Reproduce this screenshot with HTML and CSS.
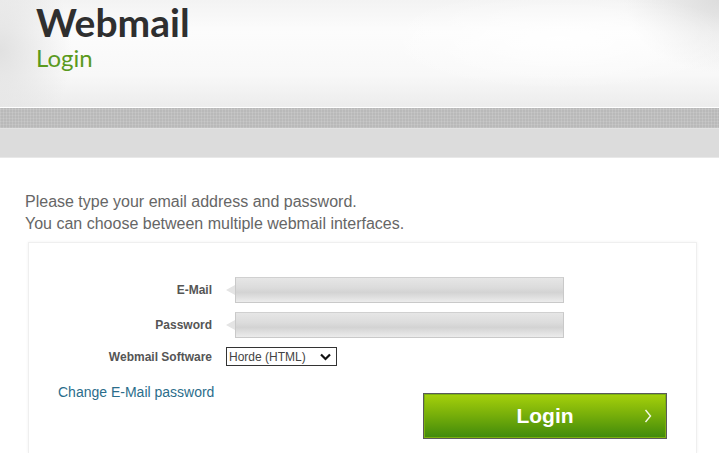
FILE: index.html
```html
<!DOCTYPE html>
<html lang="en">

<head>
  <meta charset="UTF-8">
  <meta name="viewport" content="width=device-width, initial-scale=1.0">
  <title>Webmail Login</title>
  <link rel="stylesheet" href="styles.css">
</head>

<body>
  <header class="masthead">
    <h1>Webmail</h1>
    <h2>Login</h2>
  </header>
  <div class="stripe"></div>
  <div class="band"></div>

  <main class="content">
    <p class="intro">Please type your email address and password.<br>You can choose between multiple webmail interfaces.</p>

    <form class="card">
      <div class="fields">
        <label for="email">E-Mail</label>
        <span class="field"><input type="text" id="email"></span>

        <label for="password">Password</label>
        <span class="field"><input type="password" id="password"></span>

        <label for="software">Webmail Software</label>
        <span class="picker">
          <select id="software">
            <option>Horde (HTML)</option>
            <option>Roundcube</option>
            <option>SquirrelMail</option>
          </select>
          <svg class="picker-arrow" width="11" height="8" viewBox="0 0 11 8"><path d="M1 1.5 L5.5 6 L10 1.5" fill="none" stroke="#111" stroke-width="2.2"/></svg>
        </span>
      </div>

      <div class="actions">
        <a href="#" class="change-link">Change E-Mail password</a>
        <button type="submit" class="login-btn">Login
          <svg class="chev" width="8" height="14" viewBox="0 0 8 14"><path d="M1.5 1 L6.5 7 L1.5 13" fill="none" stroke="#f4f9e8" stroke-width="1.4"/></svg>
        </button>
      </div>
    </form>
  </main>
</body>

</html>
```

FILE: styles.css
```css
body {
  margin: 0;
  font-family: "Liberation Sans", Arial, sans-serif;
  background-color: #fff;
  color: #666;
}

/* header area */
.masthead {
  height: 108px;
  box-sizing: border-box;
  padding: 0 0 0 36px;
  background:
    radial-gradient(ellipse 260px 70px at 560px 40px, rgba(255, 255, 255, 0.9), rgba(255, 255, 255, 0) 70%),
    radial-gradient(ellipse 120px 90px at 720px 0, rgba(215, 215, 215, 0.8), rgba(215, 215, 215, 0) 80%),
    radial-gradient(ellipse 90px 120px at 0 50px, rgba(222, 222, 222, 0.9), rgba(222, 222, 222, 0) 80%),
    linear-gradient(to bottom, #f3f3f3 0%, #fcfcfc 30%, #f8f8f8 70%, #ececec 100%);
  border-bottom: 1px solid #fff;
}

.masthead h1 {
  margin: 0;
  font-family: Lato, "Open Sans", sans-serif;
  font-size: 39px;
  line-height: 44px;
  font-weight: 700;
  color: #2f2f2f;
}

.masthead h2 {
  margin: 0;
  font-family: Lato, "Open Sans", sans-serif;
  font-size: 24px;
  line-height: 28px;
  font-weight: 400;
  color: #5a9a1e;
}

.stripe {
  height: 20px;
  background-color: #b9b9b9;
  background-image:
    repeating-linear-gradient(90deg, rgba(255, 255, 255, 0.12) 0 1px, rgba(0, 0, 0, 0) 1px 3px),
    repeating-linear-gradient(0deg, rgba(255, 255, 255, 0.1) 0 1px, rgba(0, 0, 0, 0) 1px 3px);
}

.band {
  height: 28px;
  background-color: #dcdcdc;
  border-top: 1px solid #e2e2e2;
  border-bottom: 1px solid #e8e8e8;
}

/* content */
.content {
  padding: 0 22px 0 25px;
}

.intro {
  margin: 33px 0 7px;
  font-size: 16px;
  line-height: 22px;
  color: #666;
}

.card {
  margin-left: 3px;
  width: 667px;
  height: 210px;
  border: 1px solid #efefef;
  border-bottom: none;
  box-shadow: 0 0 3px rgba(0, 0, 0, 0.06);
  background-color: #fff;
}

.fields {
  display: grid;
  grid-template-columns: 183px auto;
  column-gap: 14px;
  row-gap: 9px;
  align-items: center;
  justify-content: start;
  padding-top: 34px;
}

.fields label {
  text-align: right;
  font-size: 12px;
  font-weight: bold;
  color: #555;
}

.field {
  position: relative;
  display: block;
  padding-left: 9px;
}

.field::before {
  content: "";
  position: absolute;
  left: 0;
  top: 8px;
  border-style: solid;
  border-width: 5px 9px 5px 0;
  border-color: transparent #e4e4e4 transparent transparent;
}

.field input {
  display: block;
  width: 329px;
  height: 26px;
  box-sizing: border-box;
  margin: 0;
  border: 1px solid #c9c9c9;
  border-top-color: #d0d0d0;
  background: linear-gradient(to bottom, #e6e6e6 0%, #dcdcdc 40%, #d3d3d3 60%, #ececec 100%);
  font-size: 13px;
}

.picker {
  position: relative;
  display: block;
  width: 111px;
}

.picker select {
  display: block;
  width: 111px;
  height: 19px;
  margin: 0;
  padding: 0 0 0 2px;
  border: 1px solid #333;
  border-radius: 0;
  background-color: #fff;
  font-family: "Liberation Sans", Arial, sans-serif;
  font-size: 12px;
  color: #444;
  -webkit-appearance: none;
  appearance: none;
}

.picker-arrow {
  position: absolute;
  right: 6px;
  top: 6px;
  pointer-events: none;
}

.actions {
  display: flex;
  justify-content: space-between;
  align-items: flex-start;
  margin-top: 16px;
  padding: 0 29px 0 29px;
}

.change-link {
  font-size: 14px;
  line-height: 20px;
  color: #2b6d8b;
  text-decoration: none;
}

.login-btn {
  position: relative;
  width: 244px;
  height: 46px;
  margin-top: 11px;
  border: 1px solid #5a5a5a;
  box-shadow: inset 0 0 0 1px #7cb10e;
  background: linear-gradient(to bottom, #a6d10b 0%, #7fb40a 40%, #5a9b0a 75%, #3f8a0c 100%);
  color: #fff;
  font-family: "Liberation Sans", Arial, sans-serif;
  font-size: 21px;
  font-weight: bold;
  cursor: pointer;
}

.login-btn .chev {
  position: absolute;
  right: 14px;
  top: 15px;
}
```
